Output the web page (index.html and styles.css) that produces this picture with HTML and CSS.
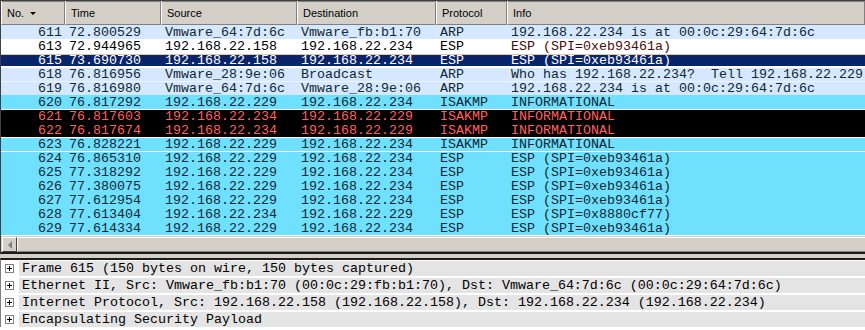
FILE: index.html
```html
<!DOCTYPE html>
<html lang="en">
<head>
    <meta charset="UTF-8">
    <meta name="viewport" content="width=device-width, initial-scale=1.0">
    <title>Packet list</title>
    <link rel="stylesheet" href="styles.css">
</head>
<body>
    <div class="capture">
        <div class="packet-list">
            <div class="list-head">
                <div class="hcell">No.<span class="sort"></span></div>
                <div class="hcell">Time</div>
                <div class="hcell">Source</div>
                <div class="hcell">Destination</div>
                <div class="hcell">Protocol</div>
                <div class="hcell">Info</div>
            </div>
            <div class="rows">
                <div class="pkt arp"><span class="no">611</span><span>72.800529</span><span>Vmware_64:7d:6c</span><span>Vmware_fb:b1:70</span><span>ARP</span><span>192.168.22.234 is at 00:0c:29:64:7d:6c</span></div>
                <div class="pkt plain"><span class="no">613</span><span>72.944965</span><span>192.168.22.158</span><span>192.168.22.234</span><span>ESP</span><span class="info">ESP (SPI=0xeb93461a)</span></div>
                <div class="pkt selected"><span class="no">615</span><span>73.690730</span><span>192.168.22.158</span><span>192.168.22.234</span><span>ESP</span><span>ESP (SPI=0xeb93461a)</span></div>
                <div class="pkt arp sep"><span class="no">618</span><span>76.816956</span><span>Vmware_28:9e:06</span><span>Broadcast</span><span>ARP</span><span>Who has 192.168.22.234?  Tell 192.168.22.229</span></div>
                <div class="pkt arp sep-soft"><span class="no">619</span><span>76.816980</span><span>Vmware_64:7d:6c</span><span>Vmware_28:9e:06</span><span>ARP</span><span>192.168.22.234 is at 00:0c:29:64:7d:6c</span></div>
                <div class="pkt udp"><span class="no">620</span><span>76.817292</span><span>192.168.22.229</span><span>192.168.22.234</span><span>ISAKMP</span><span>INFORMATIONAL</span></div>
                <div class="pkt bad sep"><span class="no">621</span><span>76.817603</span><span>192.168.22.234</span><span>192.168.22.229</span><span>ISAKMP</span><span>INFORMATIONAL</span></div>
                <div class="pkt bad"><span class="no">622</span><span>76.817674</span><span>192.168.22.234</span><span>192.168.22.229</span><span>ISAKMP</span><span>INFORMATIONAL</span></div>
                <div class="pkt udp sep"><span class="no">623</span><span>76.828221</span><span>192.168.22.229</span><span>192.168.22.234</span><span>ISAKMP</span><span>INFORMATIONAL</span></div>
                <div class="pkt udp sep"><span class="no">624</span><span>76.865310</span><span>192.168.22.229</span><span>192.168.22.234</span><span>ESP</span><span>ESP (SPI=0xeb93461a)</span></div>
                <div class="pkt udp"><span class="no">625</span><span>77.318292</span><span>192.168.22.229</span><span>192.168.22.234</span><span>ESP</span><span>ESP (SPI=0xeb93461a)</span></div>
                <div class="pkt udp"><span class="no">626</span><span>77.380075</span><span>192.168.22.229</span><span>192.168.22.234</span><span>ESP</span><span>ESP (SPI=0xeb93461a)</span></div>
                <div class="pkt udp"><span class="no">627</span><span>77.612954</span><span>192.168.22.229</span><span>192.168.22.234</span><span>ESP</span><span>ESP (SPI=0xeb93461a)</span></div>
                <div class="pkt udp"><span class="no">628</span><span>77.613404</span><span>192.168.22.234</span><span>192.168.22.229</span><span>ESP</span><span>ESP (SPI=0x8880cf77)</span></div>
                <div class="pkt udp"><span class="no">629</span><span>77.614334</span><span>192.168.22.229</span><span>192.168.22.234</span><span>ESP</span><span>ESP (SPI=0xeb93461a)</span></div>
            </div>
            <div class="hscroll">
                <div class="scroll-btn"><span class="arrow-left"></span></div>
                <div class="scroll-thumb"></div>
            </div>
        </div>
        <div class="splitter"></div>
        <div class="details">
            <div class="tree-row">
                <span class="expander"><svg width="9" height="9"><rect x="0.5" y="0.5" width="8" height="8" fill="#fff" stroke="#808080"/><path d="M2 4.5h5M4.5 2v5" stroke="#000"/></svg></span>
                <span class="label">Frame 615 (150 bytes on wire, 150 bytes captured)</span>
            </div>
            <div class="tree-row">
                <span class="expander"><svg width="9" height="9"><rect x="0.5" y="0.5" width="8" height="8" fill="#fff" stroke="#808080"/><path d="M2 4.5h5M4.5 2v5" stroke="#000"/></svg></span>
                <span class="label">Ethernet II, Src: Vmware_fb:b1:70 (00:0c:29:fb:b1:70), Dst: Vmware_64:7d:6c (00:0c:29:64:7d:6c)</span>
            </div>
            <div class="tree-row">
                <span class="expander"><svg width="9" height="9"><rect x="0.5" y="0.5" width="8" height="8" fill="#fff" stroke="#808080"/><path d="M2 4.5h5M4.5 2v5" stroke="#000"/></svg></span>
                <span class="label">Internet Protocol, Src: 192.168.22.158 (192.168.22.158), Dst: 192.168.22.234 (192.168.22.234)</span>
            </div>
            <div class="tree-row">
                <span class="expander"><svg width="9" height="9"><rect x="0.5" y="0.5" width="8" height="8" fill="#fff" stroke="#808080"/><path d="M2 4.5h5M4.5 2v5" stroke="#000"/></svg></span>
                <span class="label">Encapsulating Security Payload</span>
            </div>
        </div>
    </div>
</body>
</html>
```

FILE: styles.css
```css
body {
    margin: 0;
    background-color: #d4d0c8;
    font-family: "Liberation Sans", Arial, sans-serif;
}
.capture {
    width: 865px;
    height: 330px;
    overflow: hidden;
    background-color: #fff;
}
.packet-list {
    border-left: 1px solid #404040;
    border-bottom: 2px solid #1c1c1c;
    background-color: #fff;
}
.list-head,
.pkt {
    display: grid;
    grid-template-columns: 64px 96px 136px 139px 71px 1fr;
}
.list-head {
    height: 25px;
    box-sizing: border-box;
    border-top: 1px solid #404040;
    box-shadow: inset 0 1px 0 #808080;
    background-color: #d4d0c8;
}
.hcell {
    display: flex;
    align-items: center;
    padding-left: 5px;
    border-left: 1px solid #fff;
    border-right: 1px solid #808080;
    border-bottom: 1px solid #808080;
    font-size: 11px;
    color: #000;
}
.sort {
    margin-left: 6px;
    margin-top: 2px;
    border-left: 3px solid transparent;
    border-right: 3px solid transparent;
    border-top: 3px solid #000;
}
.pkt {
    height: 14px;
    font-family: "Liberation Mono", "Courier New", monospace;
    font-size: 13.33px;
    line-height: 15px;
    white-space: pre;
    overflow: hidden;
}
.pkt span {
    padding-left: 4px;
    overflow: hidden;
}
.pkt .no {
    padding-left: 0;
    padding-right: 3px;
    text-align: right;
}
.arp {
    background-color: #d6e8ff;
    color: #12272e;
}
.plain {
    background-color: #fff;
    color: #000;
}
.plain .info {
    color: #4a0a0a;
}
.selected {
    background-color: #0a246a;
    color: #fff;
    box-shadow: inset 0 1px 0 #fff, inset 0 2px 0 #e8c890, inset 0 -1px 0 #fff;
}
.udp {
    background-color: #70e0ff;
    color: #12272e;
}
.bad {
    background-color: #000;
    color: #ff5f5f;
}
.sep {
    box-shadow: inset 0 1px 0 #fff;
}
.sep-soft {
    box-shadow: inset 0 1px 0 #eef5ff;
}
.hscroll {
    display: flex;
    height: 17px;
    box-sizing: border-box;
    border-top: 1px solid #fff;
    padding: 1px 0 0 1px;
    background-color: #d4d0c8;
}
.scroll-btn {
    width: 15px;
    height: 15px;
    box-sizing: border-box;
    display: flex;
    align-items: center;
    justify-content: center;
    border-top: 1px solid #fff;
    border-left: 1px solid #fff;
    border-right: 1px solid #404040;
    border-bottom: 1px solid #404040;
}
.arrow-left {
    border-top: 4px solid transparent;
    border-bottom: 4px solid transparent;
    border-right: 4px solid #808080;
}
.scroll-thumb {
    flex: 1;
    border-top: 1px solid #fff;
    border-left: 1px solid #fff;
    border-bottom: 1px solid #808080;
}
.splitter {
    height: 4px;
    background-color: #d4d0c8;
}
.details {
    border-top: 2px solid #1c1c1c;
    border-left: 1px solid #808080;
    padding-top: 1px;
    background-color: #fff;
}
.tree-row {
    display: flex;
    height: 15px;
    margin-bottom: 2px;
}
.expander {
    width: 18px;
    flex-shrink: 0;
    display: flex;
    align-items: center;
    padding-left: 4px;
    box-sizing: border-box;
    background-color: #fff;
}
.expander svg {
    display: block;
}
.label {
    flex: 1;
    padding-left: 3px;
    background-color: #e4e4e4;
    color: #000;
    font-family: "Liberation Mono", "Courier New", monospace;
    font-size: 13.33px;
    line-height: 15px;
    white-space: pre;
    overflow: hidden;
}
```
